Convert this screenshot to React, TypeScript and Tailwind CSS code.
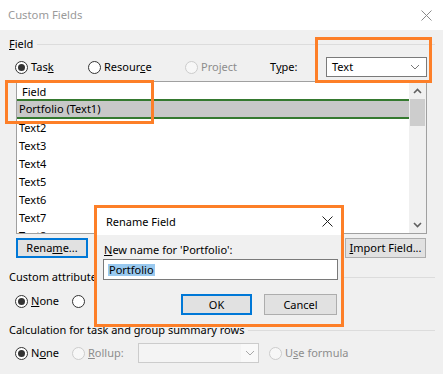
import React from 'react';

const Radio: React.FC<{ checked?: boolean; disabled?: boolean }> = ({ checked, disabled }) => (
  <span
    className={
      disabled
        ? 'w-[13px] h-[13px] rounded-full border border-[#cccccc] bg-[#f7f7f7] flex items-center justify-center shrink-0'
        : 'w-[13px] h-[13px] rounded-full border border-[#333333] bg-white flex items-center justify-center shrink-0'
    }
  >
    {checked && <span className="w-[7px] h-[7px] rounded-full bg-[#333333]" />}
  </span>
);

const Chevron: React.FC<{ color?: string }> = ({ color = '#555555' }) => (
  <svg width="10" height="6" viewBox="0 0 10 6">
    <polyline points="1,1 5,5 9,1" fill="none" stroke={color} strokeWidth="1" />
  </svg>
);

const Close: React.FC<{ color: string }> = ({ color }) => (
  <svg width="11" height="11" viewBox="0 0 11 11">
    <line x1="0.5" y1="0.5" x2="10.5" y2="10.5" stroke={color} strokeWidth="1" />
    <line x1="10.5" y1="0.5" x2="0.5" y2="10.5" stroke={color} strokeWidth="1" />
  </svg>
);

const rows = ['Text2', 'Text3', 'Text4', 'Text5', 'Text6', 'Text7', 'Text8'];

export default function App() {
  return (
    <div
      className="relative w-[443px] h-[374px] overflow-hidden bg-[#f0f0f0] text-[11px] leading-[16px] text-black"
      style={{ fontFamily: '"Noto Sans", "Open Sans", sans-serif' }}
    >
      {/* title bar */}
      <div className="h-[30px] bg-white flex items-center justify-between pl-[8px] pr-[11px]">
        <span className="text-[#9a9a9a] text-[11.3px]">Custom Fields</span>
        <Close color="#8a8a8a" />
      </div>

      <div className="pl-[9px]">
        {/* Field group */}
        <div className="mt-[7px] h-[14px] flex items-center">
          <span><u>F</u>ield</span>
          <div className="flex-1 h-px bg-[#dcdcdc] ml-[4px] mr-[8px]" />
        </div>

        <div className="mt-[6px] h-[20px] flex items-center ml-[6px]">
          <div className="w-[73px] flex items-center gap-[3px]">
            <Radio checked />
            <span>Tas<u>k</u></span>
          </div>
          <div className="w-[97px] flex items-center gap-[3px]">
            <Radio />
            <span>Resour<u>c</u>e</span>
          </div>
          <div className="w-[85px] flex items-center gap-[3px]">
            <Radio disabled />
            <span className="text-[#8d8d8d]">Pro<u>j</u>ect</span>
          </div>
          <span className="w-[56px]">T<u>y</u>pe:</span>
          <div className="w-[101px] h-[20px] bg-white border border-[#7a7a7a] flex items-center justify-between pl-[5px] pr-[6px]">
            <span>Text</span>
            <Chevron color="#777777" />
          </div>
        </div>

        {/* list */}
        <div className="mt-[4px] ml-[7px] w-[411px] h-[153px] border border-[#a0a0a0] bg-white flex overflow-hidden">
          <div className="flex-1 flex flex-col overflow-hidden">
            <div className="h-[17px] shrink-0 -ml-px border-l border-black pl-[5px] pt-[2px] flex items-center">Field</div>
            <div className="h-[20px] shrink-0 bg-[#c8c8c8] border-y-2 border-[#35792f] pl-[2px] flex items-center">
              Portfolio (Text1)
            </div>
            {rows.map(r => (
              <div key={r} className="h-[18px] shrink-0 pl-[2px] flex items-center">
                {r}
              </div>
            ))}
          </div>
          <div className="w-[17px] bg-[#f0f0f0] flex flex-col">
            <div className="h-[17px] flex items-center justify-center">
              <svg width="9" height="6" viewBox="0 0 9 6">
                <polyline points="1,5 4.5,1.5 8,5" fill="none" stroke="#606060" strokeWidth="1.6" />
              </svg>
            </div>
            <div className="h-[27px] mx-px bg-[#cdcdcd]" />
            <div className="flex-1" />
            <div className="h-[17px] flex items-center justify-center">
              <svg width="9" height="6" viewBox="0 0 9 6">
                <polyline points="1,1 4.5,4.5 8,1" fill="none" stroke="#606060" strokeWidth="1.6" />
              </svg>
            </div>
          </div>
        </div>

        {/* buttons */}
        <div className="mt-[4px] ml-[7px] w-[410px] h-[20px] flex justify-between">
          <div className="w-[72px] h-[20px] border-2 border-[#0078d7] bg-[#e1e1e1] flex items-center justify-center">
            Rena<u>m</u>e...
          </div>
          <div className="w-[81px] h-[20px] border border-[#adadad] bg-[#e1e1e1] flex items-center justify-center">
            <u>I</u>mport Field...
          </div>
        </div>

        {/* custom attributes */}
        <div className="mt-[11px] h-[16px] flex items-center">
          <span>Custom attributes</span>
          <div className="flex-1 h-px bg-[#dcdcdc] ml-[5px] mr-[8px]" />
        </div>
        <div className="mt-[8px] h-[16px] flex items-center ml-[6px]">
          <div className="w-[57px] flex items-center gap-[3px]">
            <Radio checked />
            <span><u>N</u>one</span>
          </div>
          <Radio />
        </div>

        {/* calculation */}
        <div className="mt-[13px] h-[16px] flex items-center">
          <span>Calculation for task and group summary rows</span>
          <div className="flex-1 h-px bg-[#dcdcdc] ml-[4px] mr-[8px]" />
        </div>
        <div className="mt-[5px] h-[20px] flex items-center ml-[6px]">
          <div className="w-[57px] flex items-center gap-[3px]">
            <Radio checked />
            <span>N<u>o</u>ne</span>
          </div>
          <div className="w-[66px] flex items-center gap-[3px]">
            <Radio disabled />
            <span className="text-[#8d8d8d]"><u>R</u>ollup:</span>
          </div>
          <div className="w-[121px] h-[20px] border border-[#cccccc] bg-[#f4f4f4] flex">
            <div className="flex-1" />
            <div className="w-[17px] flex items-center justify-center bg-[#f9f9f9]">
              <Chevron color="#a8a8a8" />
            </div>
          </div>
          <div className="ml-[10px] flex items-center gap-[3px]">
            <Radio disabled />
            <span className="text-[#8d8d8d]">U<u>s</u>e formula</span>
          </div>
        </div>
      </div>

      {/* annotation boxes */}
      <div className="absolute left-[315px] top-[37px] w-[117px] h-[46px] border-[3px] border-[#fd7f28]" />
      <div className="absolute left-[5px] top-[80px] w-[149px] h-[44px] border-[3px] border-[#fd7f28]" />

      {/* rename dialog */}
      <div className="absolute left-[94px] top-[205px] w-[250px] h-[122px] border-[3px] border-[#fd7f28] bg-[#f0f0f0] flex flex-col">
        <div className="h-[27px] bg-white flex items-center justify-between pl-[9px] pr-[8px]">
          <span>Rename Field</span>
          <Close color="#222222" />
        </div>
        <div className="mt-[7px] pl-[7px] h-[16px] flex items-center">
          <span><u>N</u>ew name for 'Portfolio':</span>
        </div>
        <div className="mt-[1px] ml-[6px] w-[235px] h-[21px] bg-white border border-[#7a7a7a] flex items-center pl-[4px]">
          <span className="bg-[#99c9ef] px-px leading-[12px]">Portfolio</span>
        </div>
        <div className="mt-[14px] flex justify-end gap-[12px] pr-[4px]">
          <div className="w-[71px] h-[21px] border-2 border-[#0078d7] bg-[#e1e1e1] flex items-center justify-center">OK</div>
          <div className="w-[73px] h-[21px] border border-[#adadad] bg-[#e1e1e1] flex items-center justify-center">Cancel</div>
        </div>
      </div>
    </div>
  );
}
